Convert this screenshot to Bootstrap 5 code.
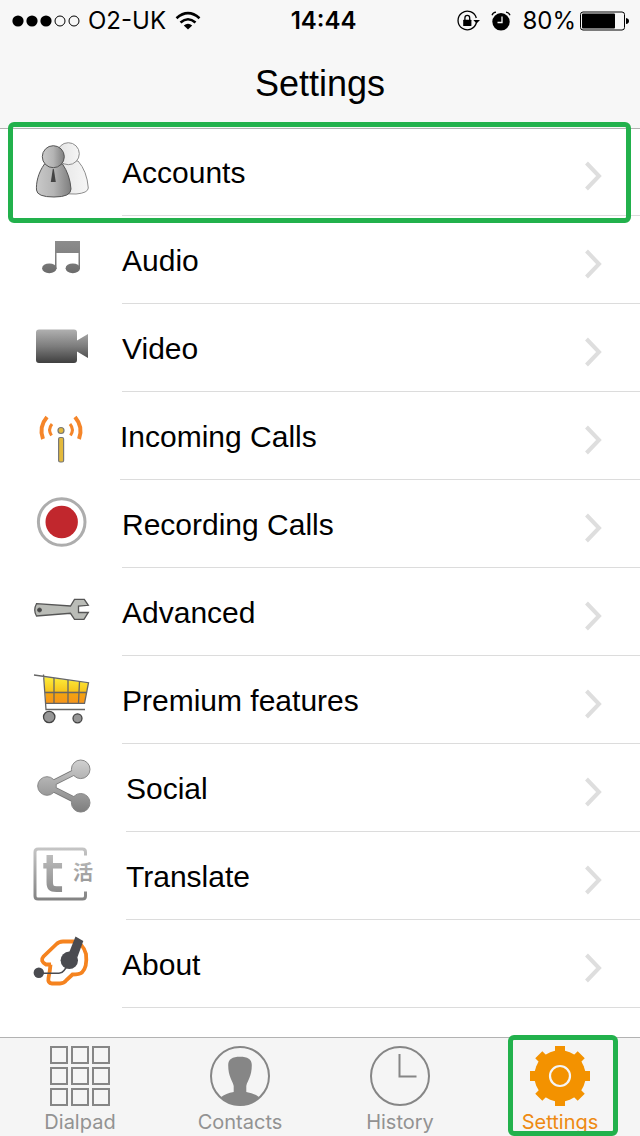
<!DOCTYPE html>
<html lang="en">
<head>
<meta charset="utf-8">
<meta name="viewport" content="width=device-width, initial-scale=1">
<title>Settings</title>
<link href="https://cdn.jsdelivr.net/npm/bootstrap@5.3.0/dist/css/bootstrap.min.css" rel="stylesheet">
<style>
  body { background: #fff; color: #000; font-family: "Liberation Sans", Arial, sans-serif; }
  svg { display: block; flex: none; }
  .top-bar { height: 128px; background: #f7f7f7; box-shadow: 0 1px 0 #b2b2b2; z-index: 1; }
  .status-row { height: 42px; padding: 0 11px 0 12px; font: 24px/42px Inter, sans-serif; }
  .status-row .clock { font-weight: 600; padding-left: 6px; }
  .status-side { flex: 1 1 0; }
  .status-tray { gap: 11px; }
  .status-power { gap: 4px; }
  .page-title { font-size: 36px; line-height: 44px; padding-top: 20px; font-weight: 400; }
  .settings-row { height: 88px; padding-left: 30px; color: #000; text-decoration: none; }
  .settings-row .row-icon { margin-top: 10px; }
  .row-label { margin-left: 28px; padding: 2px 37px 0 0; border-bottom: 1px solid #dcdcdc; font-size: 30px; line-height: 36px; }
  .row-label .chevron { margin-top: 6px; }
  .row-label.start-near { margin-left: 26px; }
  .row-label.start-far { margin-left: 32px; }
  .marker { position: absolute; border: 5px solid #22b14c; border-radius: 6px; pointer-events: none; z-index: 2; }
  .marker-row { inset: -6px 9px -7px 8px; }
  .marker-tab { inset: -3px 22px 0 28px; }
  .tab-bar { height: 99px; background: #f5f5f5; border-top: 1px solid #b2b2b2; }
  .tab-link { padding-top: 8px; color: #929292; text-decoration: none; font: 20px/24px Inter, sans-serif; }
  .tab-link span { padding-top: 4px; }
  .tab-link.active { color: #ee8a12; }
</style>
</head>
<body>
<svg width="0" height="0" class="position-absolute" aria-hidden="true">
  <defs>
    <linearGradient id="front" x1="0" x2="1"><stop offset="0" stop-color="#c9c9c9"/><stop offset=".5" stop-color="#b4b4b4"/><stop offset="1" stop-color="#7e7e7e"/></linearGradient>
    <linearGradient id="back" x1="0" x2="1"><stop offset="0" stop-color="#e2e2e2"/><stop offset="1" stop-color="#f6f6f6"/></linearGradient>
    <linearGradient id="camera" x1="0" x2="0" y1="0" y2="1"><stop offset="0" stop-color="#b0b0b0"/><stop offset=".5" stop-color="#7d7d7d"/><stop offset="1" stop-color="#3f3f3f"/></linearGradient>
    <linearGradient id="noteFill" gradientUnits="userSpaceOnUse" x1="0" x2="0" y1="15" y2="48"><stop offset="0" stop-color="#8c8c8c"/><stop offset=".3" stop-color="#858585"/><stop offset=".7" stop-color="#777"/><stop offset="1" stop-color="#6a6a6a"/></linearGradient>
    <linearGradient id="shareFill" gradientUnits="userSpaceOnUse" x1="0" x2="0" y1="5" y2="58"><stop offset="0" stop-color="#d2d2d2"/><stop offset="1" stop-color="#7e7e7e"/></linearGradient>
    <linearGradient id="basket" gradientUnits="userSpaceOnUse" x1="0" x2="0" y1="11" y2="38"><stop offset="0" stop-color="#fcee3c"/><stop offset=".5" stop-color="#f7c81e"/><stop offset=".6" stop-color="#f3a40e"/><stop offset="1" stop-color="#f7931e"/></linearGradient>
    <linearGradient id="frame" gradientUnits="userSpaceOnUse" x1="0" x2="0" y1="4" y2="60"><stop offset="0" stop-color="#c8c8c8"/><stop offset="1" stop-color="#808080"/></linearGradient>
  </defs>
  <symbol id="chev" viewBox="0 0 20 32"><path d="M3.500 3 16 16 3.500 29" fill="none" stroke="#dedede" stroke-width="4"/></symbol>
</svg>

<div class="d-flex flex-column min-vh-100">
  <header class="top-bar position-relative">
    <div class="status-row d-flex align-items-center">
      <div class="status-side d-flex align-items-center">
        <svg width="68" height="12" viewBox="0 0 68 12"><g><circle cx="6" cy="6" r="5.600"/><circle cx="20" cy="6" r="5.600"/><circle cx="34" cy="6" r="5.600"/></g><g fill="none" stroke="#000"><circle cx="48" cy="6" r="5"/><circle cx="62" cy="6" r="5"/></g></svg>
        <span class="ms-2">O2-UK</span>
        <svg class="ms-2" width="28" height="20" viewBox="0 0 28 20"><g fill="none" stroke="#000" stroke-width="2.600"><path d="M2.500 7.200Q14-2.800 25.500 7.200"/><path d="M6.500 11.500Q14 5 21.500 11.500"/></g><path d="M9.800 14.500Q14 10.800 18.200 14.500L14 18.500z"/></svg>
      </div>
      <div class="clock">14:44</div>
      <div class="status-side status-tray d-flex align-items-center justify-content-end">
        <svg width="24" height="22" viewBox="0 0 24 22"><path d="M20.400 12.500A9.300 9.300 0 1 1 20.300 8" fill="none" stroke="#000" stroke-width="1.300"/><path d="M17.300 10h6.700L20.600 13.500z"/><rect x="7.200" y="9.800" width="8.200" height="6.200" rx=".5"/><path d="M8.900 10V8a2.400 2.600 0 0 1 4.800 0v2" fill="none" stroke="#000" stroke-width="1.300"/></svg>
        <svg width="20" height="20" viewBox="0 0 20 20"><circle cx="10" cy="10.800" r="8.700"/><path d="M11 5.500V11.500H6.500" fill="none" stroke="#f7f7f7" stroke-width="1.300"/><path d="M1 4.200Q2 1.500 5 1.200M15 1.200Q18 1.500 19 4.200" fill="none" stroke="#000" stroke-width="1.300"/></svg>
        <div class="status-power d-flex align-items-center">
          <span>80%</span>
          <svg width="49" height="20" viewBox="0 0 49 20"><rect x=".5" y="1" width="44" height="18" rx="2.500" fill="none" stroke="#000"/><rect x="2" y="2.500" width="33" height="15" rx="1"/><path d="M46 7q3 .5 3 3t-3 3z"/></svg>
        </div>
      </div>
    </div>
    <h1 class="page-title text-center m-0">Settings</h1>
  </header>

  <main class="flex-grow-1">
    <nav class="d-flex flex-column" aria-label="Settings sections">
      <a href="#accounts" class="settings-row d-flex position-relative">
        <svg class="row-icon" width="64" height="64" viewBox="0 0 64 64"><g stroke="#8e8e8e" fill="url(#back)"><path d="M30 23C24 34 22 45 23 53Q34 57 46 56Q58 55 58.300 50Q57 33 48 23z"/><circle cx="38.300" cy="15.700" r="11"/></g><g stroke="#555" fill="url(#front)"><path d="M14.500 26C8 35 6 45 6.500 52Q7 59 24 59Q41 59 41 51Q40 37 32.500 26z"/><circle cx="23.300" cy="18.700" r="11"/></g><path d="M22.800 31h1l2 13h-5z" fill="#444"/></svg>
        <span class="row-label flex-grow-1 d-flex align-items-center justify-content-between">Accounts<svg class="chevron" width="20" height="32"><use href="#chev"/></svg></span>
        <span class="marker marker-row"></span>
      </a>
      <a href="#audio" class="settings-row d-flex">
        <svg class="row-icon" width="64" height="64" viewBox="0 0 64 64"><g fill="url(#noteFill)"><path d="M25 15H50V43H48.500V27H26.500V43H25z"/><ellipse cx="19.300" cy="42.300" rx="7.200" ry="4.900"/><ellipse cx="42.800" cy="42.300" rx="7.200" ry="4.900"/></g></svg>
        <span class="row-label flex-grow-1 d-flex align-items-center justify-content-between">Audio<svg class="chevron" width="20" height="32"><use href="#chev"/></svg></span>
      </a>
      <a href="#video" class="settings-row d-flex">
        <svg class="row-icon" width="64" height="64" viewBox="0 0 64 64"><path fill="url(#camera)" d="M9 15.500H44Q47 15.500 47 18.500V26.500L58 20V44L47 37.500V46Q47 49 44 49H9Q6 49 6 46V18.500Q6 15.500 9 15.500z"/></svg>
        <span class="row-label flex-grow-1 d-flex align-items-center justify-content-between">Video<svg class="chevron" width="20" height="32"><use href="#chev"/></svg></span>
      </a>
      <a href="#incoming" class="settings-row d-flex">
        <svg class="row-icon" width="64" height="64" viewBox="0 0 64 64"><g fill="none" stroke="#f58529" stroke-width="4"><path d="M17 15Q8.500 25 13 37M45 15Q53.500 25 49 37"/><path stroke-width="3" d="M22 22Q17.500 27.500 21.500 33.500M40 22Q44.500 27.500 40.500 33.500"/></g><g fill="#e3b93c" stroke="#777" stroke-width="1.200"><circle cx="31" cy="28.500" r="3"/><rect x="28.600" y="35.500" width="5" height="24.500" rx="1.500"/></g></svg>
        <span class="row-label start-near flex-grow-1 d-flex align-items-center justify-content-between">Incoming Calls<svg class="chevron" width="20" height="32"><use href="#chev"/></svg></span>
      </a>
      <a href="#recording" class="settings-row d-flex">
        <svg class="row-icon" width="64" height="64" viewBox="0 0 64 64"><circle cx="31.700" cy="32" r="23.300" fill="#fff" stroke="#adadad" stroke-width="3"/><circle cx="31.700" cy="32" r="16.200" fill="#c1272d"/></svg>
        <span class="row-label flex-grow-1 d-flex align-items-center justify-content-between">Recording Calls<svg class="chevron" width="20" height="32"><use href="#chev"/></svg></span>
      </a>
      <a href="#advanced" class="settings-row d-flex">
        <svg class="row-icon" width="64" height="64" viewBox="0 0 64 64"><path d="M6.500 25.700 40.500 28 44.500 21.300H54.300L58.300 27.300 48.500 28V34.500L58.300 34.300 54 41.300H44.500L40.500 35.300 6.500 38Q3 32 6.500 25.700z" fill="#babcb7" stroke="#555" stroke-width="1.300"/><circle cx="9.500" cy="32" r="2" fill="#444" stroke="#555"/></svg>
        <span class="row-label flex-grow-1 d-flex align-items-center justify-content-between">Advanced<svg class="chevron" width="20" height="32"><use href="#chev"/></svg></span>
      </a>
      <a href="#premium" class="settings-row d-flex">
        <svg class="row-icon" width="64" height="64" viewBox="0 0 64 64"><path d="M14 11 58.300 17 54.500 37H16z" fill="url(#basket)"/><g fill="none" stroke="#666" stroke-width="1.300"><path d="M4 9 58.500 16.700 54.500 37.300H16M13.500 8.500 16 43.500H55"/><path d="M15 26.500H56.500M24 12V37M38 14V37M49.500 15.500 48.500 37"/></g><g fill="#969696" stroke="#444" stroke-width="1.300"><circle cx="19.200" cy="51" r="5.700"/><circle cx="47.500" cy="52.300" r="4.500"/></g></svg>
        <span class="row-label flex-grow-1 d-flex align-items-center justify-content-between">Premium features<svg class="chevron" width="20" height="32"><use href="#chev"/></svg></span>
      </a>
      <a href="#social" class="settings-row d-flex">
        <svg class="row-icon" width="64" height="64" viewBox="0 0 64 64"><path d="M50.700 15 17 32 50.700 49" fill="none" stroke="#777" stroke-width="6"/><g fill="url(#shareFill)" stroke="#888"><circle cx="50.700" cy="15.300" r="9.300"/><circle cx="17" cy="32" r="9.300"/><circle cx="50.700" cy="48.800" r="9.300"/></g><path d="M48 16.500 17 32 48 47.500" fill="none" stroke="url(#shareFill)" stroke-width="4.400"/></svg>
        <span class="row-label start-far flex-grow-1 d-flex align-items-center justify-content-between">Social<svg class="chevron" width="20" height="32"><use href="#chev"/></svg></span>
      </a>
      <a href="#translate" class="settings-row d-flex">
        <svg class="row-icon" width="64" height="64" viewBox="0 0 64 64"><path d="M55.500 13.500V10Q55.500 7 52.500 7H8Q5 7 5 10V54Q5 57 8 57H52.500Q55.500 57 55.500 54V49.500" fill="none" stroke="url(#frame)" stroke-width="3"/><g fill="url(#frame)"><text x="13" y="49" font-family="DejaVu Sans, sans-serif" font-size="49" stroke="url(#frame)" stroke-width="2">t</text><text x="43" y="38" font-family="Noto Sans CJK SC, sans-serif" font-weight="700" font-size="20">活</text></g></svg>
        <span class="row-label start-far flex-grow-1 d-flex align-items-center justify-content-between">Translate<svg class="chevron" width="20" height="32"><use href="#chev"/></svg></span>
      </a>
      <a href="#about" class="settings-row d-flex">
        <svg class="row-icon" width="64" height="64" viewBox="0 0 64 64"><path d="M21 34.500H16Q9.500 31 13.500 26.500L26 14.500Q29 11.500 33 11.500H44Q53 13 56 24Q57.500 37 52 42.500Q49.500 44.500 42.500 44.500L36.500 50Q34 53.500 30 53.500H22Q17.500 53 18.500 48Q20 41 20.500 34.500" fill="#fff" stroke="#f5831f" stroke-width="3.800"/><g fill="#4a4b50"><path d="M45.500 6.500 53.300 11 47.500 27 38.500 24z"/><circle cx="39.300" cy="30.300" r="8.700"/><circle cx="8.800" cy="42.700" r="5.200"/></g><path d="M9 43.300H29Q32 43.300 34 40.500L38 35" fill="none" stroke="#4a4b50" stroke-width="1.500"/></svg>
        <span class="row-label flex-grow-1 d-flex align-items-center justify-content-between">About<svg class="chevron" width="20" height="32"><use href="#chev"/></svg></span>
      </a>
    </nav>
  </main>

  <footer class="tab-bar">
    <nav class="row g-0 h-100" aria-label="Main">
      <a href="#dialpad" class="tab-link col d-flex flex-column align-items-center">
        <svg width="60" height="60" viewBox="0 0 60 60" fill="none" stroke="#868686" stroke-width="2"><path d="M1 1h16v16H1zM22 1h16v16H22zM43 1h16v16H43zM1 22h16v16H1zM22 22h16v16H22zM43 22h16v16H43zM1 43h16v16H1zM22 43h16v16H22zM43 43h16v16H43z"/></svg>
        <span>Dialpad</span>
      </a>
      <a href="#contacts" class="tab-link col d-flex flex-column align-items-center">
        <svg width="60" height="60" viewBox="0 0 60 60"><circle cx="30" cy="30" r="29" fill="none" stroke="#868686" stroke-width="2"/><path fill="#868686" d="M30 10.700C37.500 10.700 41.800 13 41.800 19C41.800 31 37.500 34 36.300 40V46Q44 47 49.500 51.500Q40 59.500 30 59.500T10.500 51.500Q16 47 23.700 46V40C22.500 34 18.200 31 18.200 19C18.200 13 22.500 10.700 30 10.700z"/></svg>
        <span>Contacts</span>
      </a>
      <a href="#history" class="tab-link col d-flex flex-column align-items-center">
        <svg width="60" height="60" viewBox="0 0 60 60" fill="none" stroke="#868686" stroke-width="2"><circle cx="30" cy="30" r="29"/><path d="M29.500 8V30.500H46.500"/></svg>
        <span>History</span>
      </a>
      <a href="#settings" class="tab-link active col d-flex flex-column align-items-center position-relative" aria-current="page">
        <svg width="60" height="60" viewBox="0 0 60 60"><g fill="#f39200"><circle cx="30" cy="30" r="25.700"/><path id="teeth" d="M25 0H35V60H25zM0 25H60V35H0z"/><use href="#teeth" transform="rotate(45 30 30)"/></g><circle cx="30" cy="30" r="10" fill="none" stroke="#f5f5f5" stroke-width="2.200"/></svg>
        <span>Settings</span>
        <span class="marker marker-tab"></span>
      </a>
    </nav>
  </footer>
</div>
<script src="https://cdn.jsdelivr.net/npm/bootstrap@5.3.0/dist/js/bootstrap.bundle.min.js"></script>
</body>
</html>
